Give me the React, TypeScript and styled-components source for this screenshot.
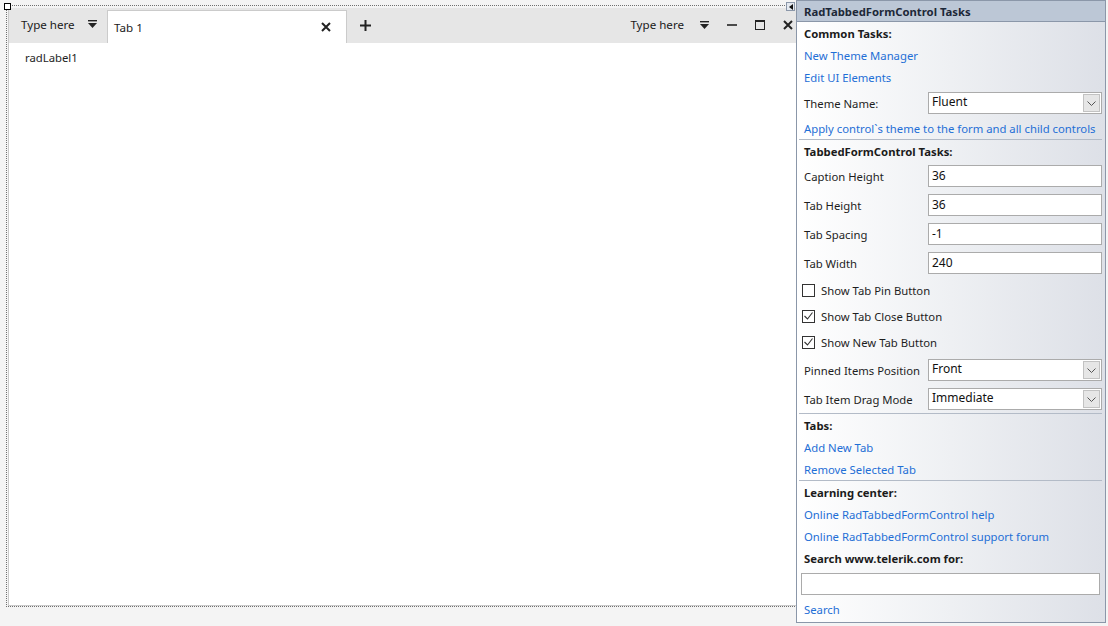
import styled, { createGlobalStyle } from "styled-components";

const GlobalStyle = createGlobalStyle`
  body {
    margin: 0;
    background: #f4f4f4;
    font-family: "Noto Sans", "Open Sans", sans-serif;
    font-size: 11.3px;
    color: #1e1e1e;
  }
`;

const Page = styled.div`
  position: relative;
  width: 1108px;
  height: 626px;
  padding: 5px 0 0 6px;
  box-sizing: border-box;
`;

const SelectionFrame = styled.div`
  position: relative;
  width: 799px;
  height: 602px;
  box-sizing: border-box;
  border: 1px dotted #6f6f6f;
  padding: 2px 1px 0 1px;
`;

const Handle = styled.span`
  position: absolute;
  left: -3px;
  top: -3px;
  width: 5px;
  height: 5px;
  border: 1px solid #000;
  background: #fff;
`;

const Form = styled.div`
  height: 100%;
  box-sizing: border-box;
  border: 1px solid #cacaca;
  border-top: none;
  background: #fff;
  display: flex;
  flex-direction: column;
`;

const TabStrip = styled.div`
  height: 35px;
  background: #e6e6e6;
  display: flex;
  align-items: stretch;
  color: #1b1b1b;
  font-size: 11.6px;
`;

const QuickAccess = styled.div`
  width: 98px;
  display: flex;
  align-items: center;
  justify-content: space-between;
  padding: 0 10px 0 12px;
  box-sizing: border-box;
  padding-bottom: 3px;
`;

const Tab = styled.div`
  width: 240px;
  margin-top: 2px;
  box-sizing: border-box;
  border: 1px solid #cbcbcb;
  border-bottom: none;
  background: #fff;
  display: flex;
  align-items: center;
  justify-content: space-between;
  padding: 0 15px 0 6px;
`;

const StripButton = styled.div<{ $w?: number }>`
  width: ${({ $w }) => $w ?? 28}px;
  display: flex;
  align-items: center;
  justify-content: center;
  padding-bottom: 1px;
`;

const Spacer = styled.div`
  flex: 1;
`;

const CaptionText = styled.span`
  display: flex;
  align-items: center;
  padding-right: 6px;
  padding-bottom: 3px;
`;

const Content = styled.div`
  flex: 1;
  padding: 7px 0 0 16px;
`;

const Panel = styled.div`
  position: absolute;
  left: 796px;
  top: 0;
  width: 310px;
  height: 623px;
  box-sizing: border-box;
  border: 1px solid #8b97a9;
  background: linear-gradient(to right, #ffffff 0%, #eef0f3 50%, #dde0e7 100%);
  display: flex;
  flex-direction: column;
`;

const Collapse = styled.div`
  position: absolute;
  left: -11px;
  top: 1px;
  width: 9px;
  height: 9px;
  box-sizing: border-box;
  border: 1px solid #8b97a9;
  background: #e4e9f0;
  display: flex;
  align-items: center;
  justify-content: center;
`;

const PanelHeader = styled.div`
  height: 20px;
  border-bottom: 1px solid #8b97a9;
  background: #bcc7d6;
  display: flex;
  align-items: center;
  padding-left: 7px;
  font-weight: 700;
  color: #1d2838;
`;

const Section = styled.div<{ $first?: boolean }>`
  margin: 0 3px 0 2px;
  border-top: ${({ $first }) => ($first ? "none" : "1px solid #b3bbc7")};
`;

const TextRow = styled.div<{ $h?: number }>`
  height: ${({ $h }) => $h ?? 22}px;
  display: flex;
  align-items: center;
  padding-left: 5px;
  padding-top: 1px;
  box-sizing: border-box;
  white-space: nowrap;
`;

const Title = styled(TextRow)`
  font-weight: 700;
  color: #1b1b1b;
`;

const Link = styled(TextRow)`
  color: #1f6fd6;
`;

const FieldRow = styled.div<{ $h?: number }>`
  height: ${({ $h }) => $h ?? 29}px;
  display: grid;
  grid-template-columns: 124px 174px;
  align-items: center;
  padding-left: 5px;
  padding-top: 1px;
  box-sizing: border-box;
  white-space: nowrap;
`;

const TextBox = styled.div`
  height: 22px;
  box-sizing: border-box;
  border: 1px solid #ababab;
  background: #fff;
  display: flex;
  align-items: center;
  padding-left: 3px;
  padding-bottom: 2px;
  color: #111;
  font-size: 12px;
`;

const ComboBox = styled(TextBox)`
  justify-content: space-between;
  padding-right: 1px;
  padding-bottom: 0;
`;

const ComboText = styled.span`
  padding-bottom: 3px;
`;

const ComboArrow = styled.span`
  width: 17px;
  height: 18px;
  box-sizing: border-box;
  border: 1px solid #c2c2c2;
  background: #e6e6e6;
  display: flex;
  align-items: center;
  justify-content: center;
`;

const CheckRow = styled.label`
  height: 26px;
  display: flex;
  align-items: center;
  gap: 6px;
  padding-left: 3px;
  white-space: nowrap;
`;

const CheckBox = styled.span`
  width: 13px;
  height: 13px;
  box-sizing: border-box;
  border: 1px solid #333;
  background: #fff;
  display: flex;
  align-items: center;
  justify-content: center;
`;

const SearchRow = styled.div`
  height: 29px;
  display: flex;
  align-items: center;
  padding: 0 2px 0 2px;
`;

const SearchBox = styled(TextBox)`
  flex: 1;
`;

const DropGlyph = () => (
  <svg width="9" height="8" viewBox="0 0 9 8">
    <rect x="0" y="0" width="9" height="1.4" fill="#222" />
    <path d="M0 3 H9 L4.5 8 Z" fill="#222" />
  </svg>
);

const CloseGlyph = ({ s = 10 }: { s?: number }) => (
  <svg width={s} height={s} viewBox="0 0 10 10">
    <path d="M1 1 L9 9 M9 1 L1 9" stroke="#222" strokeWidth="2" />
  </svg>
);

const PlusGlyph = () => (
  <svg width="11" height="11" viewBox="0 0 11 11">
    <path d="M5.5 0 V11 M0 5.5 H11" stroke="#222" strokeWidth="2" />
  </svg>
);

const MinGlyph = () => (
  <svg width="10" height="10" viewBox="0 0 10 10">
    <path d="M0 5 H10" stroke="#222" strokeWidth="1.6" />
  </svg>
);

const MaxGlyph = () => (
  <svg width="10" height="10" viewBox="0 0 10 10">
    <rect x="0.5" y="0.5" width="9" height="9" fill="none" stroke="#222" strokeWidth="1" />
    <rect x="0" y="0" width="10" height="2" fill="#222" />
  </svg>
);

const Chevron = () => (
  <svg width="9" height="5" viewBox="0 0 9 5">
    <path d="M0.5 0.5 L4.5 4.5 L8.5 0.5" fill="none" stroke="#555" strokeWidth="1" />
  </svg>
);

const Tick = () => (
  <svg width="9" height="8" viewBox="0 0 9 8">
    <path d="M0.5 4 L3.5 7 L8.5 0.5" fill="none" stroke="#333" strokeWidth="1.1" />
  </svg>
);

const Combo = ({ value }: { value: string }) => (
  <ComboBox>
    <ComboText>{value}</ComboText>
    <ComboArrow>
      <Chevron />
    </ComboArrow>
  </ComboBox>
);

const Check = ({ checked, label }: { checked?: boolean; label: string }) => (
  <CheckRow>
    <CheckBox>{checked && <Tick />}</CheckBox>
    {label}
  </CheckRow>
);

export default function App() {
  return (
    <Page>
      <GlobalStyle />
      <SelectionFrame>
        <Handle />
        <Form>
          <TabStrip>
            <QuickAccess>
              Type here
              <DropGlyph />
            </QuickAccess>
            <Tab>
              Tab 1
              <CloseGlyph />
            </Tab>
            <StripButton $w={36}>
              <PlusGlyph />
            </StripButton>
            <Spacer />
            <CaptionText>Type here</CaptionText>
            <StripButton>
              <DropGlyph />
            </StripButton>
            <StripButton>
              <MinGlyph />
            </StripButton>
            <StripButton>
              <MaxGlyph />
            </StripButton>
            <StripButton>
              <CloseGlyph />
            </StripButton>
          </TabStrip>
          <Content>radLabel1</Content>
        </Form>
      </SelectionFrame>

      <Panel>
        <Collapse>
          <svg width="4" height="6" viewBox="0 0 4 6">
            <path d="M4 0 V6 L0 3 Z" fill="#111" />
          </svg>
        </Collapse>
        <PanelHeader>RadTabbedFormControl Tasks</PanelHeader>
        <Section $first>
          <Title>Common Tasks:</Title>
          <Link>New Theme Manager</Link>
          <Link>Edit UI Elements</Link>
          <FieldRow>
            Theme Name:
            <Combo value="Fluent" />
          </FieldRow>
          <Link>Apply control`s theme to the form and all child controls</Link>
        </Section>
        <Section>
          <Title $h={21}>TabbedFormControl Tasks:</Title>
          <FieldRow>
            Caption Height
            <TextBox>36</TextBox>
          </FieldRow>
          <FieldRow>
            Tab Height
            <TextBox>36</TextBox>
          </FieldRow>
          <FieldRow>
            Tab Spacing
            <TextBox>-1</TextBox>
          </FieldRow>
          <FieldRow>
            Tab Width
            <TextBox>240</TextBox>
          </FieldRow>
          <Check label="Show Tab Pin Button" />
          <Check checked label="Show Tab Close Button" />
          <Check checked label="Show New Tab Button" />
          <FieldRow>
            Pinned Items Position
            <Combo value="Front" />
          </FieldRow>
          <FieldRow>
            Tab Item Drag Mode
            <Combo value="Immediate" />
          </FieldRow>
        </Section>
        <Section>
          <Title>Tabs:</Title>
          <Link>Add New Tab</Link>
          <Link>Remove Selected Tab</Link>
        </Section>
        <Section>
          <Title>Learning center:</Title>
          <Link>Online RadTabbedFormControl help</Link>
          <Link>Online RadTabbedFormControl support forum</Link>
          <Title>Search www.telerik.com for:</Title>
          <SearchRow>
            <SearchBox />
          </SearchRow>
          <Link>Search</Link>
        </Section>
      </Panel>
    </Page>
  );
}
